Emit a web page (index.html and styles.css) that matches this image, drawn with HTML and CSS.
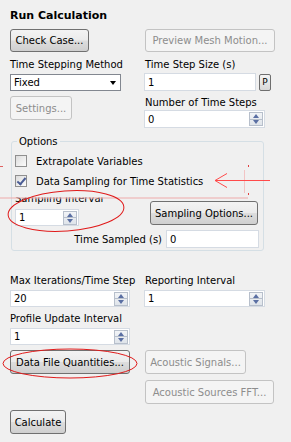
FILE: index.html
```html
<!DOCTYPE html>
<html>
<head>
<meta charset="utf-8">
<link rel="stylesheet" href="styles.css">
</head>
<body>
<div class="panel">
  <div class="title">Run Calculation</div>

  <div class="top">
    <div class="col-l">
      <div class="btn h23 w-check">Check Case...</div>
      <div class="lbl mt6">Time Stepping Method</div>
      <div class="select mt3">Fixed<span class="caret"></span></div>
      <div class="btn dis w-settings mt5">Settings...</div>
    </div>
    <div class="col-r">
      <div class="btn h23 dis w-preview ml1">Preview Mesh Motion...</div>
      <div class="lbl mt6 ml1">Time Step Size (s)</div>
      <div class="inrow mt2">
        <div class="inp w-tss">1</div>
        <div class="pbtn">P</div>
      </div>
      <div class="lbl mt5 ml1">Number of Time Steps</div>
      <div class="inp spin w-nts mt1"><span class="val">0</span><span class="arrows"></span></div>
    </div>
  </div>

  <fieldset class="group">
    <legend>Options</legend>
    <div class="chk first"><span class="box"></span>Extrapolate Variables</div>
    <div class="chk"><span class="box on"></span>Data Sampling for Time Statistics</div>
    <div class="samp">
      <div class="samp-l">
        <div class="lbl mt1">Sampling Interval</div>
        <div class="inp spin w-si mt4"><span class="val">1</span><span class="arrows"></span></div>
      </div>
      <div class="btn w-sopt">Sampling Options...</div>
    </div>
    <div class="tsamp">
      <span>Time Sampled (s)</span>
      <div class="inp w-ts">0</div>
    </div>
  </fieldset>

  <div class="bottom">
    <div class="col-l">
      <div class="lbl">Max Iterations/Time Step</div>
      <div class="inp spin w-bot mt3"><span class="val">20</span><span class="arrows"></span></div>
      <div class="lbl mt5">Profile Update Interval</div>
      <div class="inp spin w-bot mt3"><span class="val">1</span><span class="arrows"></span></div>
      <div class="btn w-dfq mt5">Data File Quantities...</div>
    </div>
    <div class="col-r">
      <div class="lbl ml1">Reporting Interval</div>
      <div class="inp spin w-rep mt3"><span class="val">1</span><span class="arrows"></span></div>
      <div class="btn dis w-asig ml1 mt-asig">Acoustic Signals...</div>
      <div class="btn dis w-asrc ml1 mt6">Acoustic Sources FFT...</div>
    </div>
  </div>
  <div class="btn w-calc mt6">Calculate</div>
</div>

<svg class="notes" width="291" height="442" viewBox="0 0 291 442">
  <rect x="12" y="188" width="130" height="9.5" fill="#f0f0f0"/>
  <line x1="0" y1="198" x2="248" y2="198" stroke="#eeaaaa" stroke-width="1"/>
  <line x1="244.5" y1="170" x2="244.5" y2="193" stroke="#f2c4c4" stroke-width="1"/>
  <rect x="248" y="165" width="1" height="2" fill="#e04040"/>
  <rect x="248" y="193" width="1" height="2" fill="#e04040"/>
  <rect x="0" y="166" width="3" height="1" fill="#e06060"/>
  <line x1="215" y1="180.5" x2="270" y2="180.5" stroke="#ff4a4a" stroke-width="1"/>
  <polyline points="227,173.5 215,180.5 227,187.5" fill="none" stroke="#ff4a4a" stroke-width="1"/>
  <ellipse cx="66" cy="211" rx="58" ry="20" fill="none" stroke="#e01a1a" stroke-width="1" transform="rotate(-4 66 211)"/>
  <ellipse cx="70" cy="363.5" rx="67" ry="14.5" fill="none" stroke="#e01a1a" stroke-width="1"/>
</svg>
</body>
</html>
```

FILE: styles.css
```css
html, body {
  margin: 0;
  padding: 0;
}
body {
  width: 291px;
  height: 442px;
  overflow: hidden;
  position: relative;
  background: #f0f0f0;
  font-family: "DejaVu Sans", "Noto Sans", sans-serif;
  font-size: 10px;
  color: #000;
}
.panel {
  padding: 9px 0 0 10px;
}
.title {
  font-weight: bold;
  font-size: 11px;
  line-height: 14px;
}
.top {
  display: flex;
  margin-top: 6px;
}
.col-l {
  width: 134px;
  display: flex;
  flex-direction: column;
  align-items: flex-start;
}
.col-r {
  display: flex;
  flex-direction: column;
  align-items: flex-start;
}
.lbl {
  line-height: 13px;
  white-space: nowrap;
}
.mt1 { margin-top: 1px; }
.mt2 { margin-top: 2px; }
.mt3 { margin-top: 3px; }
.mt4 { margin-top: 4px; }
.mt5 { margin-top: 5px; }
.mt6 { margin-top: 6px; }
.ml1 { margin-left: 1px; }

.btn {
  box-sizing: border-box;
  height: 24px;
  display: flex;
  align-items: center;
  justify-content: center;
  border: 1px solid #707070;
  border-radius: 3px;
  background: linear-gradient(#f3f3f3 0%, #ebebeb 48%, #dddddd 52%, #cfcfcf 100%);
  white-space: nowrap;
}
.btn.h23 { height: 23px; }
.btn.dis {
  border-color: #c3c3c3;
  background: #f4f4f4;
  color: #8d8d8d;
}
.w-check { width: 79px; }
.w-preview { width: 130px; }
.w-settings { width: 62px; }
.w-sopt { width: 108px; margin-top: 10px; }
.w-dfq { width: 120px; }
.w-asig { width: 101px; }
.mt-asig { margin-top: 43px; }
.w-asrc { width: 129px; }
.w-calc { width: 56px; }

.select {
  box-sizing: border-box;
  width: 111px;
  height: 17px;
  background: #fff;
  border: 1px solid #828790;
  padding-left: 3px;
  display: flex;
  align-items: center;
  position: relative;
}
.caret {
  position: absolute;
  right: 4px;
  top: 6px;
  width: 0;
  height: 0;
  border-left: 3.5px solid transparent;
  border-right: 3.5px solid transparent;
  border-top: 4px solid #000;
}

.inp {
  box-sizing: border-box;
  height: 18px;
  background: #fff;
  border: 1px solid #d5dbe3;
  padding-left: 3px;
  display: flex;
  align-items: center;
}
.inrow {
  display: flex;
  align-items: center;
  gap: 3px;
}
.w-tss { width: 112px; }
.pbtn {
  box-sizing: border-box;
  width: 12px;
  height: 17px;
  border: 1px solid #6e6e6e;
  border-radius: 2px;
  background: linear-gradient(#f4f4f4, #d8d8d8);
  font-size: 9px;
  display: flex;
  align-items: center;
  justify-content: center;
}
.spin {
  padding-right: 1px;
  justify-content: space-between;
}
.spin .arrows {
  box-sizing: border-box;
  width: 14px;
  height: 14px;
  border: 1px solid #b7bfcb;
  background:
    linear-gradient(#b7bfcb, #b7bfcb) center / 100% 1px no-repeat,
    linear-gradient(#f2f4f7, #dfe4ea);
  position: relative;
}
.spin .arrows::before,
.spin .arrows::after {
  content: "";
  position: absolute;
  left: 3px;
  width: 0;
  height: 0;
  border-left: 3.5px solid transparent;
  border-right: 3.5px solid transparent;
}
.spin .arrows::before {
  top: 1px;
  border-bottom: 4px solid #5a6fa3;
}
.spin .arrows::after {
  bottom: 1px;
  border-top: 4px solid #5a6fa3;
}
.w-nts { width: 121px; }
.w-si { width: 64px; height: 17px; }
.w-ts { width: 93px; }
.w-bot { width: 120px; height: 17px; }
.w-rep { width: 121px; height: 17px; }

.group {
  box-sizing: border-box;
  width: 253px;
  margin: 7px 0 0 1px;
  padding: 0 4px 2px 3px;
  border: 1px solid #d5dfe5;
  border-radius: 3px;
  min-width: 0;
}
.group legend {
  margin-left: 2px;
  padding: 0 2px;
  line-height: 13px;
}
.chk {
  height: 20px;
  display: flex;
  align-items: center;
  white-space: nowrap;
}
.chk.first { margin-top: 3px; }
.box {
  box-sizing: border-box;
  width: 12px;
  height: 12px;
  border: 1px solid #8f8f8f;
  background: linear-gradient(135deg, #dcdcdc, #fbfbfb);
  margin-right: 9px;
  position: relative;
}
.box.on::after {
  content: "";
  position: absolute;
  left: 3px;
  top: 0px;
  width: 3px;
  height: 7px;
  border-right: 2px solid #4b5d95;
  border-bottom: 2px solid #4b5d95;
  transform: rotate(40deg);
}
.samp {
  display: flex;
  align-items: flex-start;
}
.samp-l {
  width: 135px;
  display: flex;
  flex-direction: column;
  align-items: flex-start;
}
.tsamp {
  display: flex;
  justify-content: flex-end;
  align-items: center;
  gap: 4px;
  margin-top: 4px;
}
.bottom {
  display: flex;
  margin-top: 23px;
}
.notes {
  position: absolute;
  left: 0;
  top: 0;
  pointer-events: none;
}
```
